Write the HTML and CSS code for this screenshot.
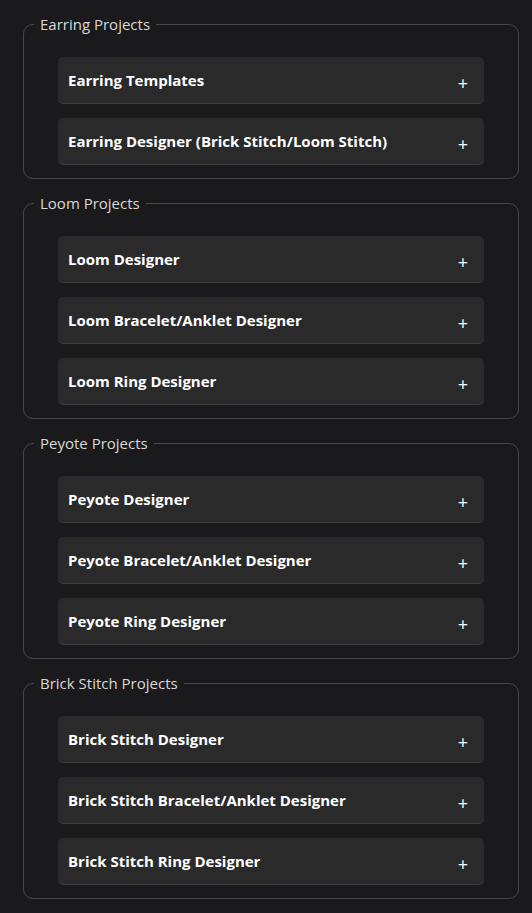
FILE: index.html
```html
<!DOCTYPE html>
<html lang="en">
<head>
    <meta charset="UTF-8">
    <meta name="viewport" content="width=device-width, initial-scale=1.0">
    <title>Bead Projects</title>
    <link rel="stylesheet" href="styles.css">
</head>
<body>

<fieldset class="group">
    <legend>Earring Projects</legend>
    <div class="item"><span>Earring Templates</span><span class="plus">+</span></div>
    <div class="item"><span>Earring Designer (Brick Stitch/Loom Stitch)</span><span class="plus">+</span></div>
</fieldset>

<fieldset class="group">
    <legend>Loom Projects</legend>
    <div class="item"><span>Loom Designer</span><span class="plus">+</span></div>
    <div class="item"><span>Loom Bracelet/Anklet Designer</span><span class="plus">+</span></div>
    <div class="item"><span>Loom Ring Designer</span><span class="plus">+</span></div>
</fieldset>

<fieldset class="group">
    <legend>Peyote Projects</legend>
    <div class="item"><span>Peyote Designer</span><span class="plus">+</span></div>
    <div class="item"><span>Peyote Bracelet/Anklet Designer</span><span class="plus">+</span></div>
    <div class="item"><span>Peyote Ring Designer</span><span class="plus">+</span></div>
</fieldset>

<fieldset class="group">
    <legend>Brick Stitch Projects</legend>
    <div class="item"><span>Brick Stitch Designer</span><span class="plus">+</span></div>
    <div class="item"><span>Brick Stitch Bracelet/Anklet Designer</span><span class="plus">+</span></div>
    <div class="item"><span>Brick Stitch Ring Designer</span><span class="plus">+</span></div>
</fieldset>

</body>
</html>
```

FILE: styles.css
```css
body {
    margin: 0;
    padding: 14px 13px 0 23px;
    background-color: #1a1a1c;
    font-family: "Open Sans", "Noto Sans", sans-serif;
    color: #fff;
}
.group {
    margin: 0 0 14px;
    padding: 23px 34px 13px;
    border: 1px solid #48484a;
    border-radius: 10px;
}
.group legend {
    padding: 0 6px;
    margin-left: -24px;
    font-size: 15px;
    line-height: 20px;
    color: #d8d8d8;
}
.item {
    display: flex;
    justify-content: space-between;
    align-items: center;
    height: 47px;
    box-sizing: border-box;
    margin-bottom: 14px;
    padding: 0 16px 0 10px;
    background-color: #2a2a2b;
    border-bottom: 1px solid #3c3c3d;
    border-radius: 5px;
    font-size: 15px;
    font-weight: 700;
}
.item:last-child {
    margin-bottom: 0;
}
.plus {
    font-size: 18px;
    font-weight: 400;
    padding-top: 6px;
}
```
